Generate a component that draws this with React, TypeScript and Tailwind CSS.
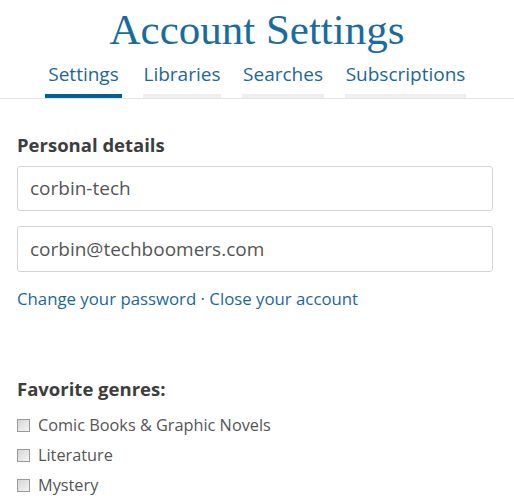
import React from 'react';

// Account settings page: title, tab strip, personal details form and genre checkboxes

const tabs = [
  { label: 'Settings', width: 'w-[77px]', active: true },
  { label: 'Libraries', width: 'w-[78px]', active: false },
  { label: 'Searches', width: 'w-[82px]', active: false },
  { label: 'Subscriptions', width: 'w-[121px]', active: false },
];

const genres = ['Comic Books & Graphic Novels', 'Literature', 'Mystery'];

const Checkbox: React.FC = () => (
  <span className="block h-[13px] w-[13px] shrink-0 border border-[#9a9a9a] bg-gradient-to-br from-[#d6d6d6] to-[#f4f4f4]" />
);

const App: React.FC = () => {
  return (
    <div className="h-[496px] w-[514px] overflow-hidden bg-white font-['Open_Sans',sans-serif]">
      {/* Page title */}
      <h1 className="pt-[6px] text-center font-['Liberation_Serif',serif] text-[43px] leading-[48px] text-[#1a6c9e]">
        Account Settings
      </h1>

      {/* Tabs */}
      <div className="mt-[7px] border-b border-[#e4e4e4]">
        <div className="flex justify-center gap-[21px] pr-[3px]">
          {tabs.map((t) => (
            <div key={t.label} className={`${t.width} flex flex-col items-center`}>
              <span className="whitespace-nowrap text-[19px] leading-[26px] text-[#1b6898]">{t.label}</span>
              <span
                className={`mt-[7px] block h-[4px] w-full ${t.active ? 'bg-[#03618f]' : 'bg-[#efefef]'}`}
              />
            </div>
          ))}
        </div>
      </div>

      {/* Personal details */}
      <div className="px-[17px] pr-[21px]">
        <h2 className="mt-[33px] text-[18.5px] font-bold leading-[26px] text-[#3d3d3d]">Personal details</h2>
        <div className="mt-[8px] flex h-[45px] items-center rounded-[3px] border border-[#d5d5d5] px-[12px] text-[19px] text-[#555]">
          corbin-tech
        </div>
        <div className="mt-[15px] flex h-[46px] items-center rounded-[3px] border border-[#d5d5d5] px-[12px] text-[19px] text-[#555]">
          corbin@techboomers.com
        </div>
        <p className="mt-[15px] text-[16.8px] leading-[24px] text-[#1b6898]">
          <a>Change your password</a> · <a>Close your account</a>
        </p>

        {/* Favorite genres */}
        <h2 className="mt-[65px] text-[18.5px] font-bold leading-[26px] text-[#3d3d3d]">Favorite genres:</h2>
        <ul className="mt-[8px]">
          {genres.map((g) => (
            <li key={g} className="flex h-[30px] items-center gap-[8px]">
              <Checkbox />
              <span className="text-[16.3px] text-[#555]">{g}</span>
            </li>
          ))}
        </ul>
      </div>
    </div>
  );
};

export default App;
